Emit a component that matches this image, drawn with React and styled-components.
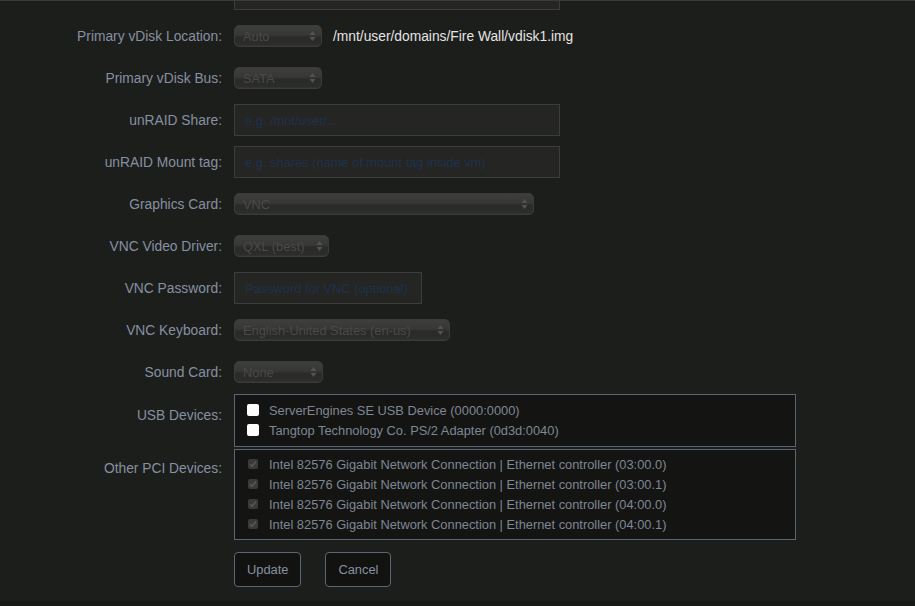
import styled, { createGlobalStyle } from "styled-components";

const GlobalStyle = createGlobalStyle`
  html, body {
    margin: 0;
    padding: 0;
    background: #1c1e1b;
    font-family: "Liberation Sans", Arial, sans-serif;
  }
`;

const Page = styled.div`
  height: 606px;
  display: flex;
  flex-direction: column;
  border-top: 1px solid #3a3b35;
  box-sizing: border-box;
  overflow: hidden;
`;

const Main = styled.div`
  flex: 1;
  overflow: hidden;
`;

const Footer = styled.div`
  height: 5px;
  background: #171815;
`;

const Form = styled.div`
  margin-top: -28px;
  display: grid;
  grid-template-columns: 222px 1fr;
  column-gap: 12px;
`;

const Label = styled.div`
  box-sizing: border-box;
  height: ${(p) => (p.$top ? "auto" : "42px")};
  padding-top: ${(p) => p.$pt || 2}px;
  display: flex;
  align-items: ${(p) => (p.$top ? "flex-start" : "center")};
  justify-content: flex-end;
  color: #8690a2;
  font-size: 13.8px;
  line-height: 16px;
  white-space: nowrap;
`;

const Field = styled.div`
  min-height: ${(p) => (p.$top ? "0" : "42px")};
  display: flex;
  align-items: ${(p) => (p.$top ? "flex-start" : "center")};
  gap: 11px;
`;

const TextInput = styled.input`
  box-sizing: border-box;
  width: ${(p) => p.$w}px;
  height: 32px;
  padding: 0 10px;
  background: #252523;
  border: 1px solid #3c3c3a;
  border-radius: 0;
  font-family: inherit;
  font-size: 12.85px;
  color: #9aa;
  outline: none;

  &::placeholder {
    color: #1d324d;
  }
`;

const SelectWrap = styled.div`
  position: relative;
  width: ${(p) => p.$w}px;
  height: 22px;
`;

const Select = styled.select`
  appearance: none;
  box-sizing: border-box;
  width: 100%;
  height: 100%;
  padding: 0 20px 0 8px;
  border: 1px solid #3b3b3a;
  border-radius: 5px;
  background: linear-gradient(
    to bottom,
    #3e3e3d 0%,
    #373736 45%,
    #2a2a29 58%,
    #2d2d2c 100%
  );
  box-shadow: inset 0 -1px 0 #323231;
  color: #4a4a49;
  font-family: inherit;
  font-size: 12.85px;
  outline: none;
`;

const Arrows = styled.svg`
  position: absolute;
  right: 6px;
  top: 5px;
  pointer-events: none;
`;

const Path = styled.span`
  color: #e4e4e4;
  font-size: 13.8px;
`;

const Box = styled.div`
  box-sizing: border-box;
  width: 562px;
  margin-top: ${(p) => p.$mt || 0}px;
  padding: ${(p) => p.$pad};
  border: 1px solid #5b6577;
  background: #141512;
`;

const Item = styled.label`
  display: flex;
  align-items: center;
  height: 20px;
  color: #7f8695;
  font-size: 12.85px;
  white-space: nowrap;
`;

const Check = styled.span`
  box-sizing: border-box;
  width: ${(p) => (p.$disabled ? 10 : 12)}px;
  height: ${(p) => (p.$disabled ? 10 : 12)}px;
  margin-left: ${(p) => (p.$disabled ? 1 : 0)}px;
  margin-right: ${(p) => (p.$disabled ? 11 : 10)}px;
  border-radius: 2px;
  background: ${(p) => (p.$disabled ? "#3a3b38" : "#ffffff")};
  display: flex;
  align-items: center;
  justify-content: center;
`;

const Buttons = styled.div`
  grid-column: 2;
  display: flex;
  gap: 24px;
  margin-top: 12px;
`;

const Button = styled.button`
  box-sizing: border-box;
  height: 35px;
  padding: 0 12px;
  background: #121310;
  border: 1px solid #5b6577;
  border-radius: 4px;
  color: #8690a2;
  font-family: inherit;
  font-size: 12.85px;
`;

const DropDown = ({ width, value }) => (
  <SelectWrap $w={width}>
    <Select defaultValue={value}>
      <option>{value}</option>
    </Select>
    <Arrows width="7" height="12" viewBox="0 0 7 12">
      <path d="M3.5 1 L6.5 5 L0.5 5 Z" fill="#525251" />
      <path d="M3.5 11 L6.5 7 L0.5 7 Z" fill="#525251" />
    </Arrows>
  </SelectWrap>
);

const usbDevices = [
  "ServerEngines SE USB Device (0000:0000)",
  "Tangtop Technology Co. PS/2 Adapter (0d3d:0040)",
];

const pciDevices = ["03:00.0", "03:00.1", "04:00.0", "04:00.1"].map(
  (id) =>
    `Intel 82576 Gigabit Network Connection | Ethernet controller (${id})`
);

export default function App() {
  return (
    <>
      <GlobalStyle />
      <Page>
        <Main>
          <Form>
            <Label />
            <Field>
              <TextInput $w={326} />
            </Field>

            <Label>Primary vDisk Location:</Label>
            <Field>
              <DropDown width={88} value="Auto" />
              <Path>/mnt/user/domains/Fire Wall/vdisk1.img</Path>
            </Field>

            <Label>Primary vDisk Bus:</Label>
            <Field>
              <DropDown width={88} value="SATA" />
            </Field>

            <Label>unRAID Share:</Label>
            <Field>
              <TextInput $w={326} placeholder="e.g. /mnt/user/..." />
            </Field>

            <Label>unRAID Mount tag:</Label>
            <Field>
              <TextInput
                $w={326}
                placeholder="e.g. shares (name of mount tag inside vm)"
              />
            </Field>

            <Label>Graphics Card:</Label>
            <Field>
              <DropDown width={300} value="VNC" />
            </Field>

            <Label>VNC Video Driver:</Label>
            <Field>
              <DropDown width={95} value="QXL (best)" />
            </Field>

            <Label>VNC Password:</Label>
            <Field>
              <TextInput $w={188} placeholder="Password for VNC (optional)" />
            </Field>

            <Label>VNC Keyboard:</Label>
            <Field>
              <DropDown width={216} value="English-United States (en-us)" />
            </Field>

            <Label>Sound Card:</Label>
            <Field>
              <DropDown width={89} value="None" />
            </Field>

            <Label $top $pt={15}>USB Devices:</Label>
            <Field $top>
              <Box $mt={1} $pad="5px 12px 6px">
                {usbDevices.map((d) => (
                  <Item key={d}>
                    <Check />
                    {d}
                  </Item>
                ))}
              </Box>
            </Field>

            <Label $top $pt={14}>Other PCI Devices:</Label>
            <Field $top>
              <Box $mt={2} $pad="4px 12px 5px">
                {pciDevices.map((d) => (
                  <Item key={d}>
                    <Check $disabled>
                      <svg width="8" height="8" viewBox="0 0 8 8">
                        <path
                          d="M1 4.2 L3.2 6.2 L7 1.5"
                          fill="none"
                          stroke="#5a5b58"
                          strokeWidth="1.4"
                        />
                      </svg>
                    </Check>
                    {d}
                  </Item>
                ))}
              </Box>
            </Field>

            <Buttons>
              <Button>Update</Button>
              <Button>Cancel</Button>
            </Buttons>
          </Form>
        </Main>
        <Footer />
      </Page>
    </>
  );
}
